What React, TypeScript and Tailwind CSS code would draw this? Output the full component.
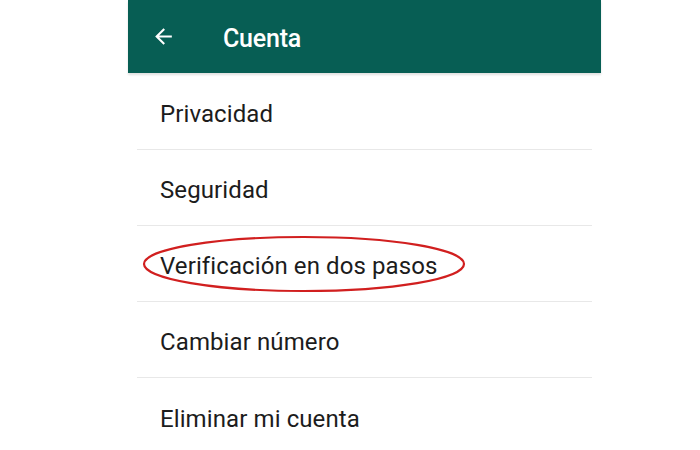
import React from "react";

const items = [
  "Privacidad",
  "Seguridad",
  "Verificación en dos pasos",
  "Cambiar número",
  "Eliminar mi cuenta",
];

export default function App() {
  return (
    <div
      className="w-[700px] h-[450px] overflow-hidden bg-white pl-[128px]"
      style={{ fontFamily: "Roboto, 'Noto Sans', sans-serif" }}
    >
      <div className="w-[473px] flex flex-col">
        <div className="h-[73px] bg-[#075e54] flex items-center pl-[23px] shadow-[0_2px_2px_rgba(0,0,0,0.12)] relative z-10">
          <svg width="25" height="25" viewBox="0 0 24 24" fill="#ffffff">
            <path d="M20 11H7.83l5.59-5.59L12 4l-8 8 8 8 1.41-1.41L7.83 13H20v-2z" />
          </svg>
          <span className="ml-[47px] mt-[5px] text-white text-[25px] font-medium tracking-[-0.2px]">
            Cuenta
          </span>
        </div>
        <div className="h-[1px]" />
        <div className="px-[9px] flex flex-col">
          {items.map((t, i) => (
            <div
              key={t}
              className={
                "relative h-[76px] flex items-center pl-[23px] text-[24px] text-[#1c1c1c] " +
                (i < items.length - 1 ? "border-b-[1.5px] border-[#e8e8e8]" : "")
              }
            >
              <span className="mt-[5px] tracking-[0.1px]">{t}</span>
              {i === 2 && (
                <svg
                  className="absolute left-[4px] top-[8px]"
                  width="326"
                  height="60"
                  viewBox="0 0 326 60"
                >
                  <ellipse
                    cx="163"
                    cy="30"
                    rx="160"
                    ry="27"
                    fill="none"
                    stroke="#d11f1f"
                    strokeWidth="2.2"
                  />
                </svg>
              )}
            </div>
          ))}
        </div>
      </div>
    </div>
  );
}
